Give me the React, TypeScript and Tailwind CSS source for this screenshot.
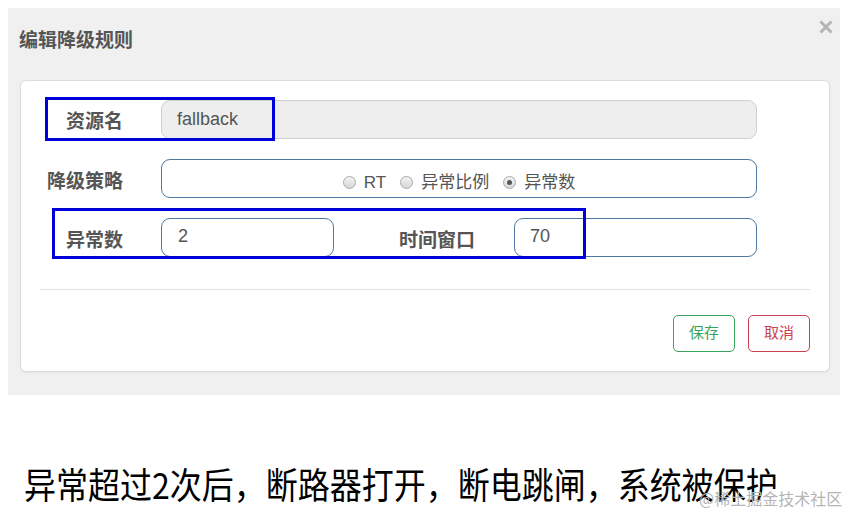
import React from 'react';

const font = { fontFamily: '"Liberation Sans", "Noto Sans CJK SC", sans-serif' };

// radio dot with the old grey gradient look
const Radio: React.FC<{ label: string; checked?: boolean }> = ({ label, checked }) => (
    <label className="flex items-center gap-[8px]">
        <span className="relative w-[13px] h-[13px] rounded-full border border-[#a9a9a9] bg-gradient-to-b from-[#f4f4f4] to-[#d6d6d6] flex items-center justify-center">
            {checked && <span className="w-[5px] h-[5px] rounded-full bg-[#555]" />}
        </span>
        <span>{label}</span>
    </label>
);

export default function App() {
    return (
        <div className="relative w-[860px] h-[514px] bg-white overflow-hidden text-[#555]" style={font}>

            {/* Modal panel */}
            <div className="ml-[8px] mt-[8px] w-[832px] h-[387px] bg-[#f0f0f0] px-[12px] relative">
                <div className="h-[72px] pt-[19px] flex items-start">
                    <h3 className="text-[19px] font-bold leading-[28px] -ml-[1px]">编辑降级规则</h3>
                </div>
                <button className="absolute right-[7px] top-[12px] w-[14px] h-[14px] text-[#b4b4b4]">
                    <svg viewBox="0 0 14 14" className="w-[14px] h-[14px]">
                        <path d="M1.5 1.5 L12.5 12.5 M12.5 1.5 L1.5 12.5" stroke="currentColor" strokeWidth="3" />
                    </svg>
                </button>

                {/* Form card */}
                <div className="bg-white border border-[#dcdcdc] rounded-[6px] shadow-[0_1px_2px_rgba(0,0,0,0.06)] px-[19px] py-[19px] w-[810px]">
                    <div className="flex items-center h-[39px]">
                        <div className="w-[121px] pr-[38px] pt-[6px] text-right text-[19px] font-bold">资源名</div>
                        <div className="w-[596px] h-[39px] rounded-[9px] border border-[#cfcfcf] bg-[#eeeeee] px-[15px] flex items-center text-[18px]">fallback</div>
                    </div>

                    <div className="flex items-center h-[39px] mt-[20px]">
                        <div className="w-[121px] pr-[38px] pt-[7px] text-right text-[19px] font-bold">降级策略</div>
                        <div className="w-[596px] h-[39px] rounded-[9px] border border-[#4d79a3] flex items-center justify-center gap-[14px] text-[17px] pt-[8px]">
                            <Radio label="RT" />
                            <Radio label="异常比例" />
                            <Radio label="异常数" checked />
                        </div>
                    </div>

                    <div className="flex items-center h-[39px] mt-[20px]">
                        <div className="w-[121px] pr-[38px] pt-[8px] text-right text-[19px] font-bold">异常数</div>
                        <div className="w-[173px] h-[39px] rounded-[9px] border border-[#4d79a3] px-[16px] flex items-center text-[18px] pb-[3px]">2</div>
                        <div className="w-[180px] pr-[39px] pt-[8px] text-right text-[19px] font-bold">时间窗口</div>
                        <div className="w-[243px] h-[39px] rounded-[9px] border border-[#4d79a3] px-[15px] flex items-center text-[18px] pb-[3px]">70</div>
                    </div>

                    <div className="mt-[32px] border-t border-[#e3e3e3]" />

                    <div className="flex justify-end gap-[13px] mt-[25px]">
                        <button className="w-[62px] h-[37px] rounded-[5px] border border-[#3aa25a] text-[#3aa25a] text-[15px]">保存</button>
                        <button className="w-[62px] h-[37px] rounded-[5px] border border-[#c9404f] text-[#c9404f] text-[15px]">取消</button>
                    </div>
                </div>
            </div>

            {/* Annotation boxes */}
            <div className="absolute left-[45px] top-[97px] w-[230px] h-[44px] border-[3px] border-[#0000dc]" />
            <div className="absolute left-[52px] top-[208px] w-[534px] h-[51px] border-[3px] border-[#0000dc]" />

            {/* Caption */}
            <p className="absolute left-[24px] top-[459px] text-[32px] leading-[48px] text-black whitespace-nowrap origin-left scale-y-[1.12]" style={{ fontFamily: '"Noto Sans CJK SC", sans-serif' }}>
                异常超过2次后，断路器打开，断电跳闸，系统被保护
            </p>
            <span className="absolute left-[699px] top-[488px] text-[16px] leading-[20px] text-[#b5b5b5] whitespace-nowrap" style={{ fontFamily: '"Noto Sans CJK SC", serif' }}>
                @稀土掘金技术社区
            </span>
        </div>
    );
}
